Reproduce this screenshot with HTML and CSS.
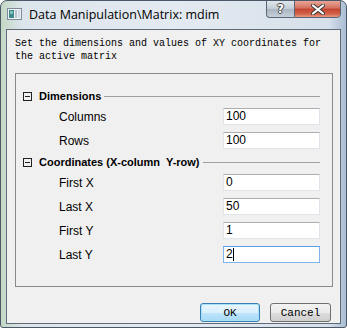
FILE: index.html
```html
<!DOCTYPE html>
<html lang="en">
<head>
  <meta charset="UTF-8">
  <title>Data Manipulation\Matrix: mdim</title>
  <link rel="stylesheet" href="styles.css">
</head>
<body>

<div class="window">
  <div class="titlebar">
    <svg class="app-icon" width="15" height="12" viewBox="0 0 15 12">
      <rect x="0.5" y="0.5" width="14" height="11" fill="#eef2f6" stroke="#7d8a98"/>
      <rect x="2" y="2" width="5" height="8" fill="#3e8a8a"/>
      <rect x="3" y="3" width="3" height="3" fill="#7cc0b8"/>
      <rect x="8" y="2" width="2" height="8" fill="#b8c4cc"/>
      <rect x="11" y="2" width="2" height="8" fill="#d4dbe0"/>
    </svg>
    <div class="title">Data Manipulation\Matrix: mdim</div>
    <div class="caption-btns">
      <div class="cap help"><span>?</span></div>
      <div class="cap close">
        <svg width="14" height="11" viewBox="0 0 14 11">
          <path d="M2 1.5 L12 9.5 M12 1.5 L2 9.5" stroke="#3a3a3a" stroke-width="4" stroke-linecap="round"/>
          <path d="M2 1.5 L12 9.5 M12 1.5 L2 9.5" stroke="#ffffff" stroke-width="2.2" stroke-linecap="round"/>
        </svg>
      </div>
    </div>
  </div>

  <div class="client">
    <div class="desc">Set the dimensions and values of XY coordinates for<br>the active matrix</div>

    <div class="group">
      <div class="section-head">
        <span class="toggle"></span>
        <span class="section-name">Dimensions</span>
        <span class="rule"></span>
      </div>
      <div class="row"><label>Columns</label><div class="field">100</div></div>
      <div class="row"><label>Rows</label><div class="field">100</div></div>

      <div class="section-head second">
        <span class="toggle"></span>
        <span class="section-name">Coordinates (X-column&nbsp; Y-row)</span>
        <span class="rule"></span>
      </div>
      <div class="row"><label>First X</label><div class="field">0</div></div>
      <div class="row"><label>Last X</label><div class="field">50</div></div>
      <div class="row"><label>First Y</label><div class="field">1</div></div>
      <div class="row"><label>Last Y</label><div class="field focused">2<span class="caret"></span></div></div>
    </div>

    <div class="buttons">
      <button class="btn default">OK</button>
      <button class="btn">Cancel</button>
    </div>
  </div>
</div>

</body>
</html>
```

FILE: styles.css
```css
body {
  margin: 0;
  background: #ffffff;
  font-family: "Liberation Sans", Arial, sans-serif;
}

.window {
  width: 347px;
  height: 328px;
  box-sizing: border-box;
  border: 1px solid #4b5868;
  border-radius: 7px 7px 3px 3px;
  background: linear-gradient(to right, #c3d8c4 0%, #dce4ec 6%, #e4eaf1 50%, #d6e0ea 95%, #a9bdd3 100%);
  padding: 0 5px 4px 5px;
  overflow: hidden;
}

.titlebar {
  height: 28px;
  display: flex;
  align-items: flex-start;
}

.app-icon {
  margin: 7px 0 0 1px;
}

.title {
  margin: 5px 0 0 7px;
  font-family: "Open Sans", sans-serif;
  font-size: 12.5px;
  color: #000;
  flex: 1;
  white-space: nowrap;
}

.caption-btns {
  display: flex;
  margin-top: -1px;
}

.cap {
  height: 18px;
  box-sizing: border-box;
  border: 1px solid #5a6675;
  display: flex;
  align-items: center;
  justify-content: center;
}

.help {
  width: 28px;
  border-right: none;
  border-radius: 0 0 0 4px;
  background: linear-gradient(#dfe5eb, #c3ccd6 50%, #aab5c1 51%, #c6d0da);
}

.help span {
  font-family: "DejaVu Sans", sans-serif;
  font-weight: bold;
  font-size: 12px;
  color: #fff;
  text-shadow: -1px 0 #444, 1px 0 #444, 0 -1px #444, 0 1px #444;
}

.close {
  width: 47px;
  border-radius: 0 0 4px 0;
  background: linear-gradient(#e8a597, #d47060 45%, #c2432c 50%, #d2614a 80%, #e89a80);
}

.client {
  height: 295px;
  box-sizing: border-box;
  border: 1px solid #5f6b78;
  background: #f0f0f0;
  padding: 7px 7px 0 8px;
}

.desc {
  font-family: "Liberation Mono", monospace;
  font-size: 10px;
  line-height: 13px;
  color: #000;
}

.group {
  margin-top: 10px;
  height: 214px;
  box-sizing: border-box;
  border: 1px solid #8a8a8a;
  padding: 15px 12px 0 7px;
}

.section-head {
  display: flex;
  align-items: center;
  height: 14px;
}

.section-head.second {
  margin-top: 6px;
}

.toggle {
  width: 9px;
  height: 9px;
  box-sizing: border-box;
  border: 1px solid #222;
  position: relative;
  margin-right: 7px;
}

.toggle::after {
  content: "";
  position: absolute;
  left: 1px;
  right: 1px;
  top: 3px;
  height: 1px;
  background: #222;
}

.section-name {
  font-weight: bold;
  font-size: 11px;
  color: #000;
  white-space: nowrap;
}

.rule {
  flex: 1;
  height: 1px;
  background: #a0a0a0;
  margin-left: 3px;
}

.row {
  display: flex;
  align-items: center;
  justify-content: space-between;
  height: 17px;
  margin-top: 7px;
}

.section-head + .row {
  margin-top: 5px;
}

.row label {
  font-size: 12px;
  color: #000;
  padding-left: 36px;
}

.field {
  width: 97px;
  height: 17px;
  box-sizing: border-box;
  border: 1px solid #e2e3ea;
  border-top-color: #abadb3;
  background: #fff;
  font-size: 12px;
  line-height: 15px;
  padding-left: 2px;
  color: #000;
  display: flex;
  align-items: center;
}

.field.focused {
  border-color: #7eb4ea;
  border-top-color: #569de5;
}

.caret {
  width: 1px;
  height: 13px;
  background: #000;
}

.buttons {
  display: flex;
  justify-content: flex-end;
  gap: 10px;
  margin-top: 16px;
  padding-right: 2px;
}

.btn {
  width: 61px;
  height: 19px;
  padding: 0;
  font-family: "Liberation Mono", monospace;
  font-size: 11px;
  color: #000;
  border: 1px solid #707070;
  border-radius: 3px;
  background: linear-gradient(#f2f2f2, #ebebeb 50%, #dddddd 51%, #cfcfcf);
}

.btn.default {
  width: 60px;
  border-color: #3c7fb1;
  background: linear-gradient(#eaf6fd, #d9f0fc 50%, #bee6fd 51%, #a7d9f5);
  box-shadow: inset 0 0 0 1px #a6e2fb;
}
```
